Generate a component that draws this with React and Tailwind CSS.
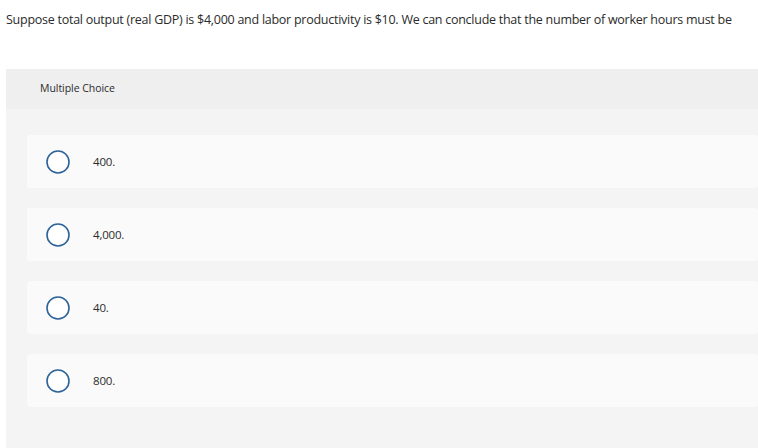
const OPTIONS = ['400.', '4,000.', '40.', '800.']

function Radio(){
  return (
    <svg width="24" height="24" viewBox="0 0 24 24" className="shrink-0">
      <circle cx="12" cy="12" r="11" fill="#fff" stroke="#2d6398" strokeWidth="1.6" />
    </svg>
  )
}

export default function App(){
  return (
    <div className="w-[758px] h-[448px] overflow-hidden bg-white text-[#2b2b2b]" style={{ fontFamily: '"Open Sans", "Liberation Sans", sans-serif' }}>
      <p className="pl-[6px] pt-[11px] h-[69px] text-[12.5px] leading-[18px] whitespace-nowrap tracking-[-0.26px]">
        Suppose total output (real GDP) is $4,000 and labor productivity is $10. We can conclude that the number of worker hours must be
      </p>

      <div className="ml-[6px] h-[379px] bg-[#f4f4f4]">
        <div className="h-[40px] bg-[#efefef] pl-[34px] flex items-center text-[10.5px] tracking-[-0.05px]">
          Multiple Choice
        </div>

        <div className="pt-[26px] pl-[21px] flex flex-col gap-[20px]">
          {OPTIONS.map(opt => (
            <div key={opt} className="h-[53px] bg-[#fafafa] rounded-[3px] flex items-center pl-[19px]">
              <Radio />
              <span className="ml-[23px] text-[11.5px] tracking-[-0.2px]">{opt}</span>
            </div>
          ))}
        </div>
      </div>
    </div>
  )
}
